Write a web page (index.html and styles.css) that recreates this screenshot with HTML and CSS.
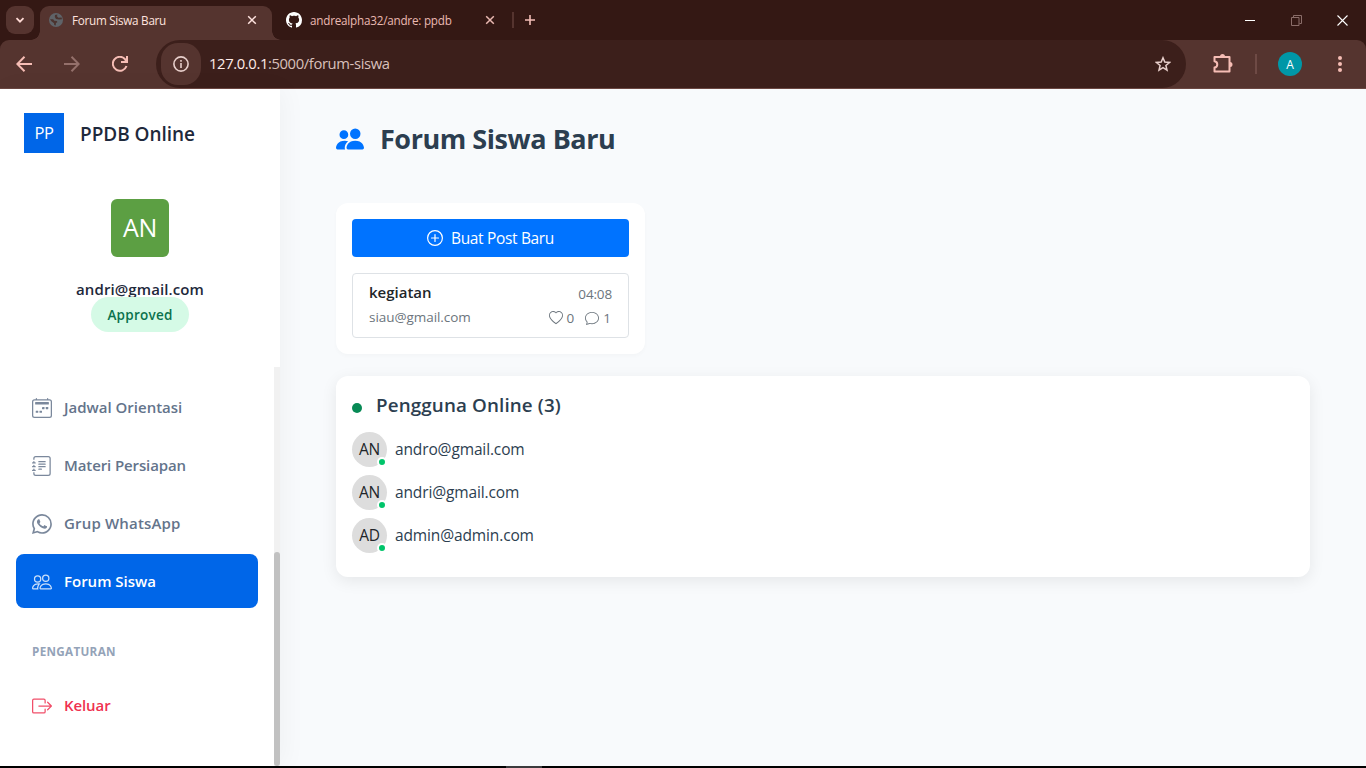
FILE: index.html
```html
<!DOCTYPE html>
<html lang="id">
<head>
<meta charset="utf-8">
<title>Forum Siswa Baru</title>
<link rel="stylesheet" href="styles.css">
</head>
<body>
<header class="browser">
  <div class="tabstrip">
    <div class="tab-search"><svg viewBox="0 0 10 10" width="10" height="10"><path d="M1.5 3.2 5 6.7 8.500 3.200" fill="none" stroke="currentColor" stroke-width="1.8"/></svg></div>
    <div class="tab active">
      <svg class="globe" viewBox="0 0 14 14" width="14" height="14"><circle cx="7" cy="7" r="7" fill="#5f6368"/><path d="M1 6.300 4.200 6.200 5.300 7.800 8 8 8.300 9.200 7 10 6.700 12.500 5.200 12 5 10.200 2.400 8.200ZM6 2 8.400 1.500 8 3.300 9.400 4.800 12.600 4.500 13 6.200 10 6.600 7 5.900 5.800 4Z" fill="#4b332f"/></svg>
      <span class="tab-title">Forum Siswa Baru</span>
      <svg class="tab-close" viewBox="0 0 10 10" width="10" height="10"><path d="M1.200 1.200 8.800 8.800M8.800 1.200 1.200 8.800" stroke="currentColor" stroke-width="1.5"/></svg>
    </div>
    <div class="tab idle">
      <svg viewBox="0 0 16 16" width="16" height="16" fill="#fff"><path d="M8 0C3.58 0 0 3.58 0 8c0 3.54 2.29 6.53 5.47 7.59.4.07.55-.17.55-.38 0-.19-.01-.82-.01-1.49-2.01.37-2.53-.49-2.69-.94-.09-.23-.48-.94-.82-1.13-.28-.15-.68-.52-.01-.53.63-.01 1.08.58 1.23.82.72 1.21 1.87.87 2.33.66.07-.52.28-.87.51-1.07-1.78-.2-3.64-.89-3.64-3.95 0-.87.31-1.59.82-2.15-.08-.2-.36-1.02.08-2.12 0 0 .67-.21 2.2.82.64-.18 1.32-.27 2-.27s1.36.09 2 .27c1.53-1.04 2.2-.82 2.2-.82.44 1.1.16 1.92.08 2.12.51.56.82 1.27.82 2.15 0 3.07-1.87 3.75-3.65 3.95.29.25.54.73.54 1.48 0 1.07-.01 1.93-.01 2.2 0 .21.15.46.55.38A8.01 8.01 0 0 0 16 8c0-4.42-3.58-8-8-8"/></svg>
      <span class="tab-title">andrealpha32/andre: ppdb</span>
      <svg class="tab-close" viewBox="0 0 10 10" width="10" height="10"><path d="M1.200 1.200 8.800 8.800M8.800 1.200 1.200 8.800" stroke="currentColor" stroke-width="1.5"/></svg>
    </div>
    <i class="tab-divider"></i>
    <svg class="new-tab" viewBox="0 0 10 10" width="10" height="10"><path d="M5 0V10M0 5H10" stroke="currentColor" stroke-width="1.600"/></svg>
    <div class="window-buttons">
      <svg viewBox="0 0 11 11" width="11" height="11"><path d="M0 5.500H10" stroke="#fff"/></svg>
      <svg viewBox="0 0 11 11" width="11" height="11"><path d="M.5 2.500h7.500v8H.5ZM2.500 2.500v-2h8v8H8.500" fill="none" stroke="#8a6d69"/></svg>
      <svg viewBox="0 0 11 11" width="11" height="11"><path d="m.5.500 10 10M10.500.500l-10 10" stroke="#fff" stroke-width="1.100"/></svg>
    </div>
  </div>
  <div class="toolbar">
    <svg class="nav back" viewBox="0 0 16 16" width="16" height="16"><path d="M16 8H1.500M8.500.800 1.300 8l7.200 7.200" fill="none" stroke="currentColor" stroke-width="2"/></svg>
    <svg class="nav forward" viewBox="0 0 16 16" width="16" height="16"><path d="M0 8h14.500M7.500.800 14.700 8l-7.200 7.200" fill="none" stroke="currentColor" stroke-width="2"/></svg>
    <svg class="nav reload" viewBox="0 0 16 16" width="16" height="16"><path d="M14.500 10A7 7 0 1 1 13.200 3.300L14.500 4.700" fill="none" stroke="currentColor" stroke-width="2"/><path d="M16 0V7H9V5h3.200L14 3.200V0Z" fill="currentColor"/></svg>
    <div class="address">
      <div class="site-info"><svg viewBox="0 0 16 16" width="16" height="16"><circle cx="8" cy="8" r="7.100" fill="none" stroke="currentColor" stroke-width="1.600"/><path d="M8 7v5M8 4v1.700" stroke="currentColor" stroke-width="1.600"/></svg></div>
      <span class="url"><b>127.0.0.1</b>:5000/forum-siswa</span>
      <svg class="star" viewBox="0 0 16 16" width="16" height="16"><path d="m8 1.800 1.800 4.300 4.700.4-3.600 3 1.100 4.600L8 11.700l-4 2.400 1.100-4.600-3.600-3 4.700-.4Z" fill="none" stroke="currentColor" stroke-width="1.500"/></svg>
    </div>
    <svg class="puzzle" viewBox="0 0 20 20" width="20" height="20"><path d="M1.500 3H16.500V17.500H1.500V13.500C5.200 13 5.200 7.800 1.500 7.300Z" fill="none" stroke="currentColor" stroke-width="2" stroke-linejoin="round"/><path d="M7 2.500a2.500 2.500 0 0 1 5 0ZM17 8a2.500 2.500 0 0 1 0 5Z" fill="currentColor"/></svg>
    <i class="bar-divider"></i>
    <div class="profile">A</div>
    <svg class="dots" viewBox="0 0 4 16" width="4" height="16" fill="currentColor"><circle cx="2" cy="2" r="2"/><circle cx="2" cy="8" r="2"/><circle cx="2" cy="14" r="2"/></svg>
  </div>
</header>

<div class="page">
  <aside class="sidebar">
    <div class="brand"><div class="brand-logo"><span>PP</span></div><span class="brand-name">PPDB Online</span></div>
    <div class="user">
      <div class="user-avatar"><span>AN</span></div>
      <div class="user-mail"><span>andri@gmail.com</span></div>
      <div class="status"><span>Approved</span></div>
    </div>
    <div class="menu-area">
      <nav class="menu">
        <a class="item"><svg viewBox="0 0 16 16" width="20" height="20" fill="currentColor"><path d="M3.500 0a.5.5 0 0 1 .5.5V1h8V.5a.5.5 0 0 1 1 0V1h1a2 2 0 0 1 2 2v11a2 2 0 0 1-2 2H2a2 2 0 0 1-2-2V3a2 2 0 0 1 2-2h1V.5a.5.500 0 0 1 .5-.5M2 2a1 1 0 0 0-1 1v11a1 1 0 0 0 1 1h12a1 1 0 0 0 1-1V3a1 1 0 0 0-1-1z"/><rect x="2.500" y="3.200" width="11" height="2" rx=".4"/><rect x="11" y="7.200" width="2" height="1.700" rx=".3"/><rect x="8" y="7.200" width="2" height="1.700" rx=".3"/><rect x="3" y="10.100" width="2" height="1.700" rx=".3"/><rect x="6" y="10.100" width="2" height="1.700" rx=".3"/></svg><span>Jadwal Orientasi</span></a>
        <a class="item materi"><svg viewBox="0 0 16 16" width="20" height="20" fill="currentColor"><path d="M5 10.500a.5.5 0 0 1 .5-.5h2a.5.5 0 0 1 0 1h-2a.5.5 0 0 1-.5-.5m0-2a.5.5 0 0 1 .5-.5h5a.5.5 0 0 1 0 1h-5a.5.5 0 0 1-.5-.5m0-2a.5.5 0 0 1 .5-.5h5a.5.5 0 0 1 0 1h-5a.5.5 0 0 1-.5-.5m0-2a.5.5 0 0 1 .5-.5h5a.5.5 0 0 1 0 1h-5a.5.5 0 0 1-.5-.5"/><path d="M3 0h10a2 2 0 0 1 2 2v12a2 2 0 0 1-2 2H3a2 2 0 0 1-2-2v-1h1v1a1 1 0 0 0 1 1h10a1 1 0 0 0 1-1V2a1 1 0 0 0-1-1H3a1 1 0 0 0-1 1v1H1V2a2 2 0 0 1 2-2"/><path d="M1 5v-.5a.5.5 0 0 1 1 0V5h.5a.5.5 0 0 1 0 1h-2a.5.5 0 0 1 0-1zm0 3v-.5a.5.5 0 0 1 1 0V8h.5a.5.5 0 0 1 0 1h-2a.5.5 0 0 1 0-1zm0 3v-.5a.5.5 0 0 1 1 0v.5h.5a.5.5 0 0 1 0 1h-2a.5.5 0 0 1 0-1z"/></svg><span>Materi Persiapan</span></a>
        <a class="item grup"><svg viewBox="0 0 16 16" width="20" height="20" fill="currentColor"><path d="M13.601 2.326A7.85 7.85 0 0 0 7.994 0C3.627 0 .068 3.558.064 7.926c0 1.399.366 2.760 1.057 3.965L0 16l4.204-1.102a7.900 7.900 0 0 0 3.790.965h.004c4.368 0 7.926-3.558 7.930-7.930A7.900 7.900 0 0 0 13.600 2.326zM7.994 14.521a6.600 6.600 0 0 1-3.356-.920l-.240-.144-2.494.654.666-2.433-.156-.251a6.560 6.560 0 0 1-1.007-3.505c0-3.626 2.957-6.584 6.591-6.584a6.560 6.560 0 0 1 4.660 1.931 6.560 6.560 0 0 1 1.928 4.660c-.004 3.639-2.961 6.592-6.592 6.592m3.615-4.934c-.197-.099-1.170-.578-1.353-.646-.182-.065-.315-.099-.445.099-.133.197-.513.646-.627.775-.114.133-.232.148-.430.050-.197-.100-.836-.308-1.592-.985-.590-.525-.985-1.175-1.103-1.372-.114-.198-.011-.304.088-.403.087-.088.197-.232.296-.346.100-.114.133-.198.198-.330.065-.134.034-.248-.015-.347-.050-.099-.445-1.076-.612-1.470-.160-.389-.323-.335-.445-.340-.114-.007-.247-.007-.380-.007a.730.730 0 0 0-.529.247c-.182.198-.691.677-.691 1.654s.710 1.916.810 2.049c.098.133 1.394 2.132 3.383 2.992.470.205.840.326 1.129.418.475.152.904.129 1.246.080.380-.058 1.171-.480 1.338-.943.164-.464.164-.860.114-.943-.049-.084-.182-.133-.380-.232"/></svg><span>Grup WhatsApp</span></a>
        <a class="item current"><svg viewBox="0 0 16 16" width="20" height="20" fill="currentColor"><path d="M15 14s1 0 1-1-1-4-5-4-5 3-5 4 1 1 1 1zm-7.978-1L7 12.996c.001-.264.167-1.030.760-1.720C8.312 10.629 9.282 10 11 10c1.717 0 2.687.630 3.240 1.276.593.690.758 1.457.760 1.720l-.008.002-.014.002zM11 7a2 2 0 1 0 0-4 2 2 0 0 0 0 4m3-2a3 3 0 1 1-6 0 3 3 0 0 1 6 0M6.936 9.280a6 6 0 0 0-1.230-.247A7 7 0 0 0 5 9c-4 0-5 3-5 4q0 1 1 1h4.216A2.240 2.240 0 0 1 5 13c0-1.010.377-2.042 1.090-2.904.243-.294.526-.569.846-.816M4.920 10A5.500 5.500 0 0 0 4 13H1c0-.260.164-1.030.760-1.724.545-.636 1.492-1.256 3.160-1.275ZM1.500 5.500a3 3 0 1 1 6 0 3 3 0 0 1-6 0m3-2a2 2 0 1 0 0 4 2 2 0 0 0 0-4"/></svg><span>Forum Siswa</span></a>
        <div class="menu-heading">PENGATURAN</div>
        <a class="item logout"><svg viewBox="0 0 16 16" width="20" height="20" fill="currentColor"><path d="M10 12.500a.5.5 0 0 1-.5.5h-8a.5.5 0 0 1-.5-.5v-9a.5.5 0 0 1 .5-.5h8a.5.5 0 0 1 .5.5v2a.5.5 0 0 0 1 0v-2A1.500 1.500 0 0 0 9.500 2h-8A1.500 1.500 0 0 0 0 3.500v9A1.500 1.500 0 0 0 1.500 14h8a1.500 1.500 0 0 0 1.500-1.500v-2a.5.5 0 0 0-1 0z"/><path d="M15.854 8.354a.5.5 0 0 0 0-.708l-3-3a.5.5 0 0 0-.708.708L14.293 7.500H5.500a.5.5 0 0 0 0 1h8.793l-2.147 2.146a.5.5 0 0 0 .708.708z"/></svg><span>Keluar</span></a>
      </nav>
      <div class="scroll-track"><div class="scroll-thumb"></div></div>
    </div>
  </aside>

  <main class="content">
    <h1 class="title"><svg viewBox="0 0 16 16" width="28" height="28" fill="#0073ff"><path d="M7 14s-1 0-1-1 1-4 5-4 5 3 5 4-1 1-1 1zm4-6a3 3 0 1 0 0-6 3 3 0 0 0 0 6m-5.784 6A2.240 2.240 0 0 1 5 13c0-1.355.680-2.750 1.936-3.720A6.300 6.300 0 0 0 5 9c-4 0-5 3-5 4s1 1 1 1zM4.500 8a2.500 2.500 0 1 0 0-5 2.500 2.500 0 0 0 0 5"/></svg><span>Forum Siswa Baru</span></h1>
    <section class="posts">
      <button class="new-post"><svg viewBox="0 0 16 16" width="16" height="16" fill="none" stroke="currentColor" stroke-width="1.200"><circle cx="8" cy="8" r="7.400"/><path d="M8 4.500v7M4.500 8h7" stroke-linecap="round"/></svg><span>Buat Post Baru</span></button>
      <article class="post">
        <div class="post-row"><strong>kegiatan</strong><span class="muted time">04:08</span></div>
        <div class="post-row"><span class="muted mail">siau@gmail.com</span>
          <div class="counts muted"><svg viewBox="0 0 16 16" width="14" height="14" fill="currentColor"><path d="m8 2.748-.717-.737C5.600.281 2.514.878 1.400 3.053c-.523 1.023-.641 2.500.314 4.385.920 1.815 2.834 3.989 6.286 6.357 3.452-2.368 5.365-4.542 6.286-6.357.955-1.886.838-3.362.314-4.385C13.486.878 10.400.280 8.717 2.010zM8 15C-7.333 4.868 3.279-3.040 7.824 1.143q.090.083.176.171a3 3 0 0 1 .176-.170C12.720-3.042 23.333 4.867 8 15"/></svg><span>0</span><svg class="chat" viewBox="0 0 16 16" width="14" height="14" fill="currentColor"><path d="M2.678 11.894a1 1 0 0 1 .287.801 11 11 0 0 1-.398 2c1.395-.323 2.247-.697 2.634-.893a1 1 0 0 1 .710-.074A8 8 0 0 0 8 14c3.996 0 7-2.807 7-6s-3.004-6-7-6-7 2.808-7 6c0 1.468.617 2.830 1.678 3.894m-.493 3.905a22 22 0 0 1-.713.129c-.200.032-.352-.176-.273-.362a10 10 0 0 0 .244-.637l.003-.010c.248-.720.450-1.548.524-2.319C.743 11.370 0 9.760 0 8c0-3.866 3.582-7 8-7s8 3.134 8 7-3.582 7-8 7a9 9 0 0 1-2.347-.306c-.520.263-1.639.742-3.468 1.105"/></svg><span>1</span></div></div>
      </article>
    </section>
    <section class="online">
      <h2><i></i><span>Pengguna Online (3)</span></h2>
      <div class="person"><div class="avatar">AN</div><span>andro@gmail.com</span></div>
      <div class="person"><div class="avatar">AN</div><span>andri@gmail.com</span></div>
      <div class="person"><div class="avatar">AD</div><span>admin@admin.com</span></div>
    </section>
  </main>
</div>
<footer class="taskbar"><i></i></footer>
</body>
</html>
```
FILE: styles.css
```css
*, *::before, *::after { box-sizing: border-box; }
body {
  margin: 0;
  width: 1366px;
  height: 768px;
  overflow: hidden;
  display: flex;
  flex-direction: column;
  font-family: "Open Sans", "Noto Sans", sans-serif;
  font-size: 15.5px;
  color: #212529;
  background: #f8fafc;
}
svg { display: block; flex: none; }
span, strong { white-space: nowrap; }

/* Browser frame */
.browser { background: #341814; color: #f3d9d5; height: 89px; flex: none; }
.tabstrip { height: 40px; display: flex; align-items: center; padding-left: 6px; }
.tab-search { width: 28px; height: 28px; border-radius: 9px; background: #55342f; display: grid; place-items: center; color: #ffdad5; }
.tab { display: flex; align-items: center; font-size: 11.7px; }
.tab.active {
  position: relative;
  width: 232px; height: 34px; align-self: flex-end; margin-left: 6px; padding: 0 15px 6px 9px;
  border-radius: 9px 9px 0 0; background: #55342f; color: #ffe3df;
}
.tab.active::before, .tab.active::after {
  content: ""; position: absolute; bottom: 0; width: 9px; height: 9px;
}
.tab.active::before { left: -9px; background: radial-gradient(circle at 0 0, transparent 8.500px, #55342f 9px); }
.tab.active::after { right: -9px; background: radial-gradient(circle at 100% 0, transparent 8.500px, #55342f 9px); }
.tab.active .tab-title { margin-left: 9px; letter-spacing: -.273px; }
.tab-close { margin-left: auto; }
.tab.idle { margin-left: 14px; width: 209px; color: #eab9b2; }
.tab.idle .tab-title { margin-left: 8px; letter-spacing: -.22px; }
.tab-divider { width: 2px; height: 16px; background: #55342f; margin-left: 17px; }
.new-tab { margin-left: 11px; color: #f3bdb6; }
.window-buttons { margin-left: auto; display: flex; gap: 35px; padding-right: 18px; }
.toolbar { height: 49px; background: #55342f; border-bottom: 1px solid #6b4742; border-radius: 9px 9px 0 0; display: flex; align-items: center; padding-left: 16px; color: #f6bdb5; }
.nav + .nav { margin-left: 32px; }
.forward { color: #94706b; }
.address { width: 1030px; height: 48px; border-radius: 24px; background: #3c1f1b; margin-left: 28px; display: flex; align-items: center; padding: 0 15px 0 5px; color: #e8cfcb; }
.site-info { width: 40px; height: 42px; border-radius: 17px; background: #55342f; display: grid; place-items: center; }
.url { font-size: 14.8px; margin-left: 8px; padding-bottom: 2px; color: #d9c0bb; letter-spacing: -.385px; }
.url b { font-weight: 400; color: #ffece9; }
.star { margin-left: auto; }
.puzzle { margin-left: 27px; }
.bar-divider { width: 2px; height: 20px; background: #6e4a45; margin-left: 22px; }
.profile { width: 24px; height: 24px; margin-left: 21px; border-radius: 50%; background: #0097a7; color: #fff; display: grid; place-items: center; font-size: 12px; }
.dots { margin-left: 36px; }

/* Page */
.page { height: 677px; flex: none; display: flex; }
.sidebar { width: 280px; background: #fff; box-shadow: 4px 0 24px rgba(0, 0, 0, .04); display: flex; flex-direction: column; }
.brand { display: flex; align-items: center; gap: 16px; padding: 24px 24px 0; height: 64px; color: #1e293b; }
.brand-logo { width: 40px; height: 40px; padding-bottom: 2px; background: #0066e8; color: #fff; display: grid; place-items: center; font-size: 16.500px; letter-spacing: -.43px; }
.brand-name { font-size: 19px; font-weight: 600; padding-top: 2px; letter-spacing: -.04px; }
.user { display: flex; flex-direction: column; align-items: center; padding-top: 46px; height: 214px; color: #1e293b; }
.user-avatar { width: 58px; height: 58px; padding-bottom: 2px; border-radius: 6px; background: #5c9f43; color: #fff; display: grid; place-items: center; font-size: 25px; letter-spacing: -.32px; }
.user-mail { font-weight: 600; font-size: 15px; line-height: 20px; height: 18px; margin-top: 22px; letter-spacing: .106px; }
.status { position: relative; width: 98px; text-align: center; height: 35px; border-radius: 18px; background: #d5fae6; color: #0b724d; font-size: 13.500px; font-weight: 600; line-height: 37px; letter-spacing: .24px; }
.menu-area { flex: 1; display: flex; justify-content: space-between; }
.menu { width: 242px; margin-left: 16px; padding-top: 13px; }
.item { height: 54px; margin-bottom: 4px; display: flex; align-items: center; gap: 12px; padding: 0 16px; border-radius: 8px; color: #64748b; font-weight: 600; font-size: 15px; }
.item svg { opacity: .85; margin-top: 2px; }
.item.materi span { letter-spacing: -.109px; }
.item.grup span { letter-spacing: .17px; }
.item.current { background: #0066e8; color: #fff; }
.item.current svg { opacity: .8; }
.item.logout { color: #ef3150; margin-top: 16px; letter-spacing: -.1px; }
.menu-heading { font-size: 11.700px; font-weight: 700; color: #94a3b8; padding: 28px 16px 0; height: 50px; line-height: 22px; letter-spacing: .3px; }
.scroll-track { width: 6px; background: #f1f1f1; padding-top: 185px; display: flex; }
.scroll-thumb { width: 6px; border-radius: 3px; background: #c1c1c1; }
.content { flex: 1; padding: 28px 56px 0; }
.title { margin: 0; height: 43px; display: flex; align-items: center; gap: 16px; font-size: 27px; font-weight: 700; color: #2c3e50; letter-spacing: -.45px; }
.posts { width: 309px; height: 151px; margin-top: 43px; padding: 16px; border-radius: 12px; background: #fff; box-shadow: 0 2px 4px rgba(0, 0, 0, .025); }
.new-post { width: 100%; height: 38px; border: 0; border-radius: 4px; background: #0073ff; color: #fff; font: inherit; letter-spacing: -.339px; display: flex; align-items: center; justify-content: center; gap: 8px; }
.post { height: 65px; margin-top: 16px; padding: 5px 16px 0; border: 1px solid #dee2e6; border-radius: 4px; }
.post-row { display: flex; justify-content: space-between; align-items: center; height: 25px; }
.post-row strong { font-weight: 600; font-size: 15px; }
.muted { color: #6c757d; font-size: 13.500px; }
.mail { letter-spacing: -.05px; }
.time { padding-top: 4px; letter-spacing: -.15px; }
.counts { display: flex; align-items: center; gap: 4px; padding-top: 2px; }
.counts span { margin-right: 1px; }
.chat { margin: 1px 0 0 6px; }
.online { height: 201px; margin-top: 22px; padding: 16px; border-radius: 12px; background: #fff; box-shadow: 0 4px 16px rgba(0, 0, 0, .08); }
.online h2 { margin: 0 0 14px; height: 26px; display: flex; align-items: center; gap: 14px; font-size: 18.800px; font-weight: 600; color: #2c3e50; letter-spacing: .14px; }
.online h2 i { width: 10px; height: 10px; margin-top: 5px; border-radius: 50%; background: #078a55; }
.person { height: 35px; margin-bottom: 8px; display: flex; align-items: center; gap: 8px; color: #2c3e50; letter-spacing: -.13px; }
.person > span { padding-bottom: 2px; }
.avatar { position: relative; width: 35px; height: 35px; padding-bottom: 2px; border-radius: 50%; background: #ddd; color: #212529; display: grid; place-items: center; letter-spacing: -.24px; }
.avatar::after { content: ""; position: absolute; right: 0; bottom: 0; width: 10px; height: 10px; border: 2px solid #fff; border-radius: 50%; background: #00c46a; }
.taskbar { height: 2px; background: #000; display: flex; }
.taskbar i { width: 36px; margin-left: 506px; background: #3b3b3d; }
```
